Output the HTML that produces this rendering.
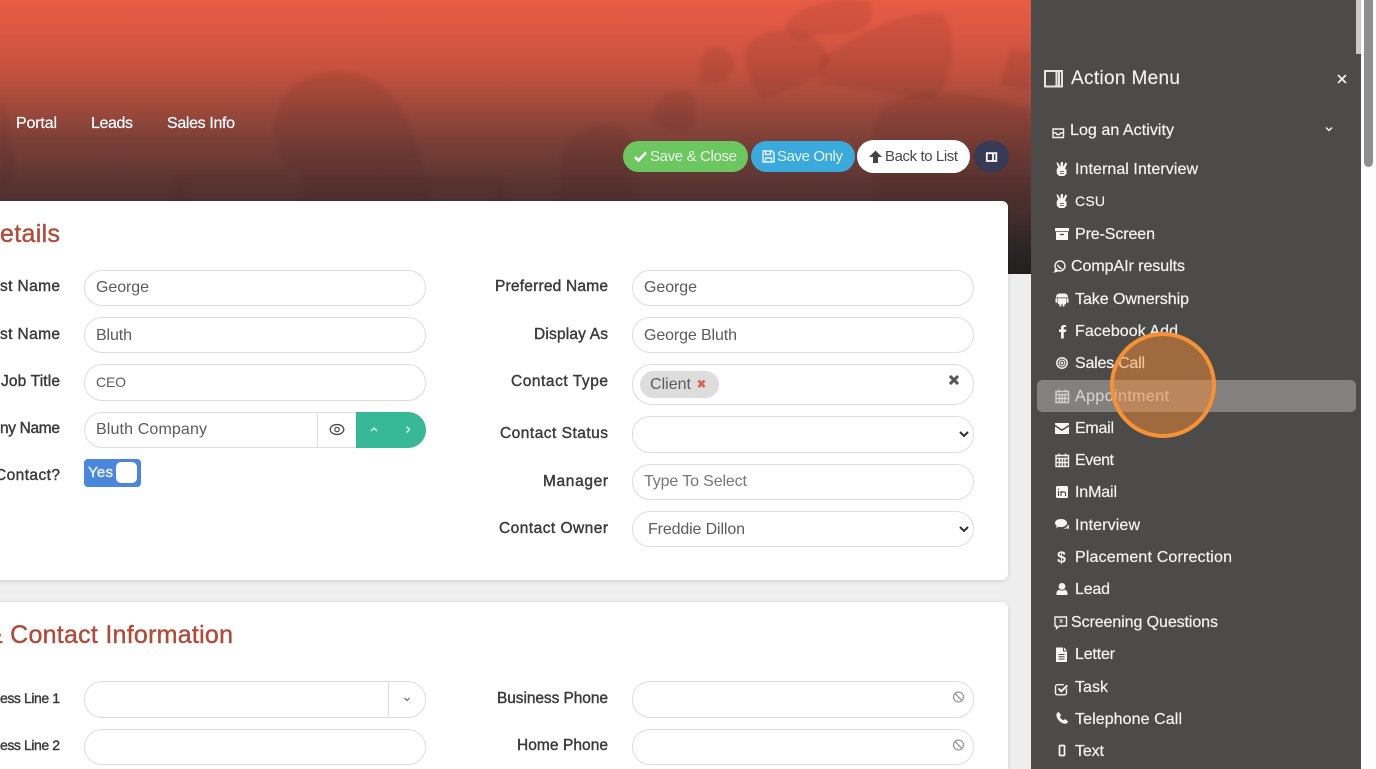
<!DOCTYPE html>
<html><head><meta charset="utf-8"><title>Contact Details</title>
<style>
*{box-sizing:border-box}
html,body{margin:0;padding:0;width:1376px;height:769px;overflow:hidden;background:#eee;font-family:"Liberation Sans",sans-serif}
#root{position:relative;width:1376px;height:769px;overflow:hidden;background:#eee}
.a{position:absolute}
#hdr{left:0;top:0;width:1031px;height:274px;background:linear-gradient(180deg,#e85c45 0,#df5943 25px,#c5523f 70px,#a04a3b 105px,#7c4038 140px,#5c3633 180px,#4a302f 205px,#2c2425 250px,#231f20 274px)}
.card{background:#fff;border-radius:6px;box-shadow:0 1px 4px rgba(0,0,0,.13)}
.in{background:#fff;border:1px solid #ddd;border-radius:18px;height:36px}
.btn{border-radius:17px}
#panel{left:1031px;top:0;width:330px;height:769px;background:#4d4b49}
svg text{font-family:"Liberation Sans",sans-serif}
.nav{font-size:16px;fill:#fff;stroke:#fff;stroke-width:.2}
.lb{font-size:15.5px;fill:#3a3a3a;stroke:#3a3a3a;stroke-width:.4}
.val{font-size:16px;fill:#5c5c5c}
.h{font-size:25px;fill:#b14a39;stroke:#b14a39;stroke-width:.4}
.m{font-size:16px;fill:#f3f3f3;stroke:#f3f3f3;stroke-width:.2}
.b{font-size:15px}
</style></head><body>
<div id="root">
<div class="a" id="hdr"></div>
<svg class="a" style="left:0;top:0;filter:blur(2.5px)" width="1031" height="274" viewBox="0 0 1031 274">
 <g fill="#3a1510" fill-opacity=".1">
  <path d="M275 125C280 85 310 70 340 71C385 73 410 110 420 160C428 185 425 205 425 205H300C310 185 300 175 285 165C280 150 272 140 275 125Z"/>
  <path d="M172 205V178Q172 174 176 174H290V180H185V205ZM425 205V178H500Q506 178 506 184V205H495V185H430V205Z"/>
  <path d="M0 95C10 130 18 160 12 180L0 190Z"/>
  <path d="M560 165C565 125 610 115 630 135C635 160 625 175 640 205H560Z"/>
  <path d="M650 120C660 85 690 85 695 100L695 125C680 140 665 125 650 120Z"/>
  <path d="M700 60C710 40 730 45 735 65C730 80 710 90 700 80Z"/>
  <path d="M745 50C765 20 810 25 830 55C825 85 790 85 765 100C750 85 745 70 745 50Z"/>
  <path d="M785 25C800 5 835 -5 870 2C880 30 850 35 820 35C805 40 790 40 785 25Z"/>
  <path d="M820 60C860 30 920 5 945 15C960 50 950 90 930 100C890 95 850 85 820 85Z"/>
  <path d="M880 110C920 80 980 95 1031 110V205H880C870 180 870 130 880 110Z"/>
  <path d="M1010 50H1031V90L1000 85Z"/>
 </g>
</svg>
<div class="a card" style="left:-20px;top:201px;width:1028px;height:379px"></div>
<div class="a card" style="left:-20px;top:602px;width:1028px;height:200px"></div>

<div class="a in" style="left:84px;top:270px;width:342px"></div>
<div class="a in" style="left:84px;top:317px;width:342px"></div>
<div class="a in" style="left:84px;top:364px;width:342px;height:37px"></div>
<div class="a in" style="left:84px;top:412px;width:342px;overflow:hidden"><div class="a" style="left:232px;top:0;width:1px;height:36px;background:#ddd"></div></div>
<div class="a" style="left:356px;top:412px;width:70px;height:36px;background:#37b897;border-radius:0 18px 18px 0"></div>
<div class="a" style="left:84px;top:459px;width:57px;height:28px;background:#4a86dc;border-radius:4px"></div>
<div class="a" style="left:116px;top:462px;width:21px;height:21px;background:#fff;border-radius:5px"></div>

<div class="a in" style="left:632px;top:270px;width:342px"></div>
<div class="a in" style="left:632px;top:317px;width:342px"></div>
<div class="a in" style="left:632px;top:364px;width:342px;height:41px;border-radius:20px"></div>
<div class="a" style="left:640px;top:371px;width:79px;height:27px;background:#ddd;border-radius:14px"></div>
<div class="a in" style="left:632px;top:416px;width:342px;height:37px"></div>
<div class="a in" style="left:632px;top:464px;width:342px"></div>
<div class="a in" style="left:632px;top:511px;width:342px"></div>

<div class="a in" style="left:84px;top:681px;width:342px;height:37px"><div class="a" style="left:303px;top:0;width:1px;height:35px;background:#ddd"></div></div>
<div class="a in" style="left:84px;top:729px;width:342px"></div>
<div class="a in" style="left:632px;top:681px;width:342px;height:37px"></div>
<div class="a in" style="left:632px;top:729px;width:342px"></div>

<div class="a btn" style="left:623px;top:141px;width:125px;height:31px;background:#6cc760"></div>
<div class="a btn" style="left:751px;top:141px;width:104px;height:31px;background:#3aa9db"></div>
<div class="a btn" style="left:857px;top:140px;width:113px;height:33px;background:#fff"></div>
<div class="a btn" style="left:974px;top:141px;width:35px;height:31px;background:#363a55"></div>

<div class="a" id="panel"></div>
<div class="a" style="left:1037px;top:380px;width:319px;height:32px;background:rgba(255,255,255,.3);border-radius:5px"></div>
<div class="a" style="left:1356px;top:0;width:5px;height:54px;background:#c9c9c9"></div>
<div class="a" style="left:1361px;top:0;width:15px;height:769px;background:#fdfdfd"></div>
<div class="a" style="left:1364px;top:-6px;width:9px;height:173px;background:#8f8f8f;border-radius:5px"></div>

<svg class="a" style="left:0;top:0" width="1376" height="769" viewBox="0 0 1376 769">
 <text class="nav" x="16" y="128" textLength="41">Portal</text>
 <text class="nav" x="91" y="128" textLength="42">Leads</text>
 <text class="nav" x="167" y="128" textLength="68">Sales Info</text>

 <text class="b" x="650" y="161" textLength="87" fill="#e9f7e6">Save &amp; Close</text>
 <text class="b" x="777" y="161" textLength="66" fill="#e6f5fc">Save Only</text>
 <text class="b" x="885" y="161" textLength="73" fill="#4a4a4a">Back to List</text>
 <path d="M635 157l3.500 3.500 7.500-8" fill="none" stroke="#fff" stroke-width="2.600"/>
 <path d="M763 151h9l2 2v9h-11zM765.500 151v3.500h5V151M765.500 162v-4h6v4" fill="none" stroke="#e6f5fc" stroke-width="1.400"/>
 <path d="M875.500 150.500l-6.500 6.500h4v6h5v-6h4z" fill="#444"/>
 <path d="M986.800 153.200h9.500v7.800h-9.500zM993 153v8" fill="none" stroke="#fff" stroke-width="1.800"/>

 <text class="h" x="0" y="242" textLength="60">etails</text>
 <text class="h" x="-14" y="643" textLength="247">&amp; Contact Information</text>

 <text class="lb" x="0" y="291" textLength="60">st Name</text>
 <text class="lb" x="0" y="339" textLength="60">st Name</text>
 <text class="lb" x="1" y="386" textLength="59">Job Title</text>
 <text class="lb" x="0" y="433" textLength="60">ny Name</text>
 <text class="lb" x="-5" y="480" textLength="65">Contact?</text>
 <text class="lb" style="font-size:14px" x="0" y="703" textLength="60">ess Line 1</text>
 <text class="lb" style="font-size:14px" x="0" y="750" textLength="60">ess Line 2</text>
 <text class="lb" x="495" y="291" textLength="113">Preferred Name</text>
 <text class="lb" x="534" y="339" textLength="74">Display As</text>
 <text class="lb" x="511" y="386" textLength="97">Contact Type</text>
 <text class="lb" x="500" y="438" textLength="108">Contact Status</text>
 <text class="lb" x="543" y="486" textLength="65">Manager</text>
 <text class="lb" x="499" y="533" textLength="109">Contact Owner</text>
 <text class="lb" x="497" y="703" textLength="111">Business Phone</text>
 <text class="lb" x="517" y="750" textLength="91">Home Phone</text>

 <text class="val" x="96" y="292" textLength="53">George</text>
 <text class="val" x="96" y="340" textLength="36">Bluth</text>
 <text class="val" style="font-size:14px" x="96" y="387" textLength="30">CEO</text>
 <text class="val" x="96" y="434" textLength="111">Bluth Company</text>
 <text class="val" x="644" y="292" textLength="53">George</text>
 <text class="val" x="644" y="340" textLength="93">George Bluth</text>
 <text class="val" x="650" y="389" textLength="41">Client</text>
 <text class="val" x="644" y="486" textLength="103" style="fill:#777">Type To Select</text>
 <text class="val" x="648" y="534" textLength="97">Freddie Dillon</text>
 <text x="88" y="477" font-size="15" fill="#e8f1fc" stroke="#e8f1fc" stroke-width=".45" textLength="25">Yes</text>

 <path d="M698.500 380.500l6 6.500M704.500 380.500l-6 6.500" stroke="#d9604c" stroke-width="2.600"/>
 <path d="M950 376l8 8M958 376l-8 8" stroke="#555" stroke-width="3"/>
 <path d="M960 432l4 4 4-4M960 527l4 4 4-4" fill="none" stroke="#333" stroke-width="2"/>
 <ellipse cx="337" cy="429.500" rx="6.800" ry="5" fill="none" stroke="#444" stroke-width="1.300"/><circle cx="337" cy="429.500" r="2.200" fill="none" stroke="#444" stroke-width="1.200"/>
 <path d="M371 431l3-3 3 3M406.500 426.500l3 3-3 3" fill="none" stroke="#d5f2ea" stroke-width="1.500"/>
 <path d="M404.500 698l2.500 2.500 2.500-2.500" fill="none" stroke="#555" stroke-width="1"/>
 <g fill="none" stroke="#999" stroke-width="1.300"><circle cx="958.500" cy="697" r="5"/><path d="M955 693.500l7 7"/><circle cx="958.500" cy="745" r="5"/><path d="M955 741.500l7 7"/></g>

 <!-- Action menu -->
 <path d="M1045 71h17v15.500h-17zM1056.500 71v15.500M1059 71v15.500" fill="none" stroke="#e6e6e6" stroke-width="2"/>
 <text x="1071" y="84" font-size="19" fill="#f1f1f1" stroke="#f1f1f1" stroke-width=".15" textLength="109">Action Menu</text>
 <path d="M1338 75l8 8M1346 75l-8 8" stroke="#f1f1f1" stroke-width="1.800"/>
 <path d="M1053 129h10.500v8.500h-10.500zM1053 133h3l1 1.500h2.500l1-1.500h3" fill="none" stroke="#f1f1f1" stroke-width="1.400"/>
 <text class="m" x="1070" y="135" textLength="104">Log an Activity</text>
 <path d="M1326 127.500l3 3 3-3" fill="none" stroke="#f1f1f1" stroke-width="1.500"/>

 <text class="m" x="1075" y="174" textLength="123">Internal Interview</text>
 <text class="m" style="font-size:14px" x="1075" y="206" textLength="30">CSU</text>
 <text class="m" x="1075" y="239" textLength="80">Pre-Screen</text>
 <text class="m" x="1071" y="271" textLength="114">CompAIr results</text>
 <text class="m" x="1075" y="304" textLength="114">Take Ownership</text>
 <text class="m" x="1075" y="336" textLength="103">Facebook Add</text>
 <text class="m" x="1075" y="368" textLength="70">Sales Call</text>
 <text class="m" x="1075" y="401" textLength="94" style="fill:#d0cfce;stroke:#d0cfce">Appointment</text>
 <text class="m" x="1075" y="433" textLength="39">Email</text>
 <text class="m" x="1075" y="465" textLength="39">Event</text>
 <text class="m" x="1075" y="497" textLength="42">InMail</text>
 <text class="m" x="1075" y="530" textLength="65">Interview</text>
 <text class="m" x="1075" y="562" textLength="157">Placement Correction</text>
 <text class="m" x="1075" y="594" textLength="35">Lead</text>
 <text class="m" x="1071" y="627" textLength="147">Screening Questions</text>
 <text class="m" x="1075" y="659" textLength="40">Letter</text>
 <text class="m" x="1075" y="692" textLength="33">Task</text>
 <text class="m" x="1075" y="724" textLength="107">Telephone Call</text>
 <text class="m" x="1075" y="756" textLength="29">Text</text>

 <!-- sidebar icons -->
 <path d="M1058 162.500l2.300 4.500 .5-5 2.200 0 .2 5 2.300-4.500 1.800 .8-2.300 5.500 1.500 1v4l-2.300 2.200h-5l-2.500-2.500v-4.500l1.500-1.500-1.900-5z" fill="#f4f4f4"/>
 <path d="M1060 171.500h4M1060 173.500h4" stroke="#4d4b49" stroke-width=".7"/>
 <path d="M1058 194.500l2.300 4.500 .5-5 2.200 0 .2 5 2.300-4.500 1.800 .8-2.300 5.500 1.500 1v4l-2.300 2.200h-5l-2.500-2.500v-4.500l1.500-1.500-1.900-5z" fill="#f4f4f4"/>
 <path d="M1060 203.500h4M1060 205.500h4" stroke="#4d4b49" stroke-width=".7"/>
 <path d="M1055 228h14v3.200h-14zM1056 232h12v8h-12z" fill="#f8f8f8"/><path d="M1060 234.500h4" stroke="#4d4b49" stroke-width="1.300"/>
 <circle cx="1060" cy="266" r="5" fill="none" stroke="#f1f1f1" stroke-width="1.400"/><path d="M1054.500 272l1.500-3.500 2 2.500zM1057.500 264.500q.8 3.500 5 4.500" fill="#f1f1f1" stroke="#f1f1f1" stroke-width="1.100"/>
 <path d="M1059 293.500h6a3.500 3.500 0 0 1 3 4h-12A3.500 3.500 0 0 1 1059 293.500zM1058 298.300h8v6h-1.500v2.200h-1.800v-2.200h-1.400v2.200H1059.500v-2.200H1058zM1055.500 298.300h2v4.500h-2zM1066.500 298.300h2v4.500h-2z" fill="#f4f4f4"/>
 <path d="M1065.500 325h-2a2.500 2.500 0 0 0-2.500 2.500v2h-2v2.500h2v6.500h2.800V332h2.200l.4-2.500h-2.600v-1.700q0-.8 .8-.8h1.900z" fill="#f4f4f4"/>
 <g fill="none" stroke="#f1f1f1"><circle cx="1062" cy="363" r="5.200" stroke-width="1.500"/><circle cx="1062" cy="363" r="2.900" stroke-width="1.100"/></g><circle cx="1062" cy="363" r="1.300" fill="#f1f1f1"/>
 <g fill="none" stroke="#d2d1d0" stroke-width="1.400"><path d="M1056 391.500h12.500v11h-12.500zM1056 394.500h12.500M1059.500 394.500v8M1062.300 394.500v8M1065 394.500v8M1056 398.500h12.500M1059 389.500v3M1065.500 389.500v3"/></g>
 <path d="M1055 423h14v1.800l-7 4.500-7-4.500zM1055 426.500l7 4.500 7-4.500v7.500h-14z" fill="#f6f6f6"/>
 <g fill="none" stroke="#f1f1f1" stroke-width="1.400"><path d="M1056 455.500h12.500v11h-12.500zM1056 458.500h12.500M1059.500 458.500v8M1062.300 458.500v8M1065 458.500v8M1056 462.500h12.500M1059 453.500v3M1065.500 453.500v3"/></g>
 <rect x="1056" y="486" width="12" height="12" rx="1.500" fill="#f6f6f6"/><path d="M1058.500 491v5M1058.500 488.500v1.200M1061 496v-5M1061 493q2.500-2.500 4.500 0v3" fill="none" stroke="#4d4b49" stroke-width="1.200"/>
 <path d="M1061 519c-3.500 0-6 1.800-6 4 0 1.200 .8 2.200 1.800 3l-.9 2 2.800-1.200c.7 .2 1.400 .3 2.300 .3 3.300 0 6-1.800 6-4.100s-2.700-4-6-4z" fill="#f6f6f6"/><path d="M1068 524.500c1 .7 1.300 1.800 .7 3l.7 1.500-2.300-.7c-1 .5-2.300 .6-3.600 .2 2.500-.4 4.300-2 4.500-4z" fill="#f6f6f6"/>
 <text x="1057" y="562.500" font-size="16" font-weight="700" fill="#f6f6f6" textLength="9.500">$</text>
 <path d="M1062 583a3.300 3.300 0 1 1 0 6.800 3.300 3.300 0 0 1 0-6.800zM1056.500 595v-2c0-2 1.500-3 3-3.300 1.500 1.200 3.500 1.200 5 0 1.500 .3 3 1.300 3 3.300v2z" fill="#f6f6f6"/>
 <path d="M1055 617h11.500v9h-7l-3 2.500V626h-1.500z" fill="none" stroke="#f1f1f1" stroke-width="1.400"/><path d="M1059 620h3v2h-1.500v1" fill="none" stroke="#f1f1f1" stroke-width="1"/>
 <path d="M1056 647.500h7v4h4v10.500h-11zM1064 647.500l3 3h-3z" fill="#f8f8f8"/><path d="M1058.500 654.500h6M1058.500 656.800h6M1058.500 659h6" stroke="#4d4b49" stroke-width="1"/>
 <path d="M1066.500 688.500v4.500a1.800 1.800 0 0 1-1.800 1.800h-7.400a1.800 1.800 0 0 1-1.800-1.800v-6.500a1.800 1.800 0 0 1 1.800-1.800h6.500" fill="none" stroke="#f1f1f1" stroke-width="1.400"/><path d="M1058.500 688.500l2.800 2.800 6-6" fill="none" stroke="#f1f1f1" stroke-width="2"/>
 <path d="M1058.500 712c-1.800 .8-2.300 2.200-2 3.800 .5 3.800 4.200 7.500 8 8 1.600 .2 2.800-.5 3.700-2l-3-2.700-1.900 1.200c-1.500-.7-2.700-1.900-3.400-3.400l1.200-1.900z" fill="#f6f6f6"/>
 <rect x="1059.500" y="745.500" width="5" height="10" rx=".8" fill="none" stroke="#f6f6f6" stroke-width="1.700"/>
</svg>

<div class="a" style="left:1110px;top:332px;width:106px;height:106px;border-radius:50%;background:rgba(248,140,50,.48);border:4px solid #f79135"></div>
</div>
</body></html>
